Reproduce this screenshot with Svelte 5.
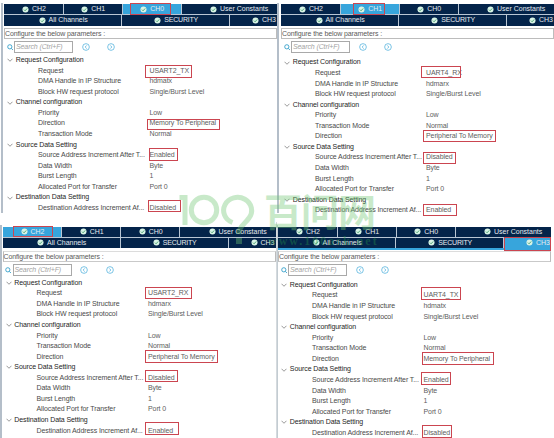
<script>
  const request = (name, handle) => [
    { group: 'Request Configuration' },
    { label: 'Request', value: name },
    { label: 'DMA Handle in IP Structure', value: handle },
    { label: 'Block HW request protocol', value: 'Single/Burst Level' },
    { group: 'Channel configuration' },
    { label: 'Priority', value: 'Low' },
  ];
  const data = (src, dst) => [
    { group: 'Source Data Setting' },
    { label: 'Source Address Increment After T...', value: src },
    { label: 'Data Width', value: 'Byte' },
    { label: 'Burst Length', value: '1' },
    { label: 'Allocated Port for Transfer', value: 'Port 0' },
    { group: 'Destination Data Setting' },
    { label: 'Destination Address Increment Af...', value: dst },
  ];
  const mode = { label: 'Transaction Mode', value: 'Normal' };
  const direction = (value) => ({ label: 'Direction', value });

  const panels = [
    { id: 'a', active: 'CH0', rows: [...request('USART2_TX', 'hdmatx'), direction('Memory To Peripheral'), mode, ...data('Enabled', 'Disabled')] },
    { id: 'b', active: 'CH1', rows: [...request('UART4_RX', 'hdmarx'), mode, direction('Peripheral To Memory'), ...data('Disabled', 'Enabled')] },
    { id: 'c', active: 'CH2', rows: [...request('USART2_RX', 'hdmarx'), mode, direction('Peripheral To Memory'), ...data('Disabled', 'Enabled')] },
    { id: 'd', active: 'CH3', rows: [...request('UART4_TX', 'hdmatx'), mode, direction('Memory To Peripheral'), ...data('Enabled', 'Disabled')] },
  ];
  const top = ['CH2', 'CH1', 'CH0', 'User Constants'];
  const bottom = ['All Channels', 'SECURITY', 'CH3'];

  // Highlight frames: left, top, width, height
  const marks = [
    [130, 3, 41, 12], [144.5, 64.5, 47, 13.5], [147.3, 119, 73, 11], [149, 148, 29, 13], [148, 200, 33, 12],
    [353, 3, 32, 12], [421, 66, 40, 12], [423, 130, 73, 12], [423, 151.5, 33, 12], [423, 203.5, 34, 12],
    [13, 226, 40, 11], [144.5, 287, 47, 12], [145, 350, 73, 13], [145, 370, 33, 12], [144.5, 422, 34, 12.5],
    [504, 237, 47, 14], [421, 287, 40, 13], [421.5, 352, 72, 13], [421, 372, 30, 13], [421.5, 424.5, 30, 13],
  ];
</script>

{#snippet tab(name, active)}
  <div class="tab" class:on={name === active} class:user={name === 'User Constants'} class:last={name === 'CH3'}>
    <svg class="check" viewBox="0 0 12 12"><circle cx="6" cy="6" r="5.2" fill="#d9f4e6" /><path d="M3.3 6.2 5.3 8.2 8.9 4.2" fill="none" stroke="#4ba273" stroke-width="1.6" /></svg>
    <span>{name}</span>
  </div>
{/snippet}

<main>
  {#each panels as p}
    <section class="panel {p.id}">
      <div class="tabs">
        <div class="row first">{#each top as t}{@render tab(t, p.active)}{/each}</div>
        <div class="row second">{#each bottom as t}{@render tab(t, p.active)}{/each}</div>
      </div>
      <div class="hint">Configure the below parameters :</div>
      <div class="tools">
        <svg class="lens" viewBox="0 0 12 12"><circle cx="5.2" cy="5.2" r="3.9" /><path d="M8.1 8.1 11.2 11.4" /></svg>
        <div class="search">Search (Ctrl+F)</div>
        <svg class="nav prev" viewBox="0 0 16 16"><circle cx="8" cy="8" r="6.7" /><path d="M9.5 4.8 6.3 8 9.5 11.2" /></svg>
        <svg class="nav" viewBox="0 0 16 16"><circle cx="8" cy="8" r="6.7" /><path d="M6.5 4.8 9.7 8 6.5 11.2" /></svg>
      </div>
      <div class="tree">
        {#each p.rows as r}
          {#if r.group}
            <div class="line group"><svg class="chev" viewBox="0 0 12 8"><path d="M1 1.5 6 6.5 11 1.5" /></svg><span>{r.group}</span></div>
          {:else}
            <div class="line"><span class="label">{r.label}</span><span class="value">{r.value}</span></div>
          {/if}
        {/each}
      </div>
    </section>
  {/each}

  {#each marks as [x, y, w, h]}
    <i class="mark" style="left:{x}px;top:{y}px;width:{w}px;height:{h}px"></i>
  {/each}

  <div class="brand">
    <svg width="80" height="56" viewBox="0 0 80 56" fill="none" stroke="#70c774" stroke-width="5">
      <path d="M-0.500 8.500H5V36" />
      <circle cx="24" cy="21" r="12.700" />
      <path d="M52.500 33.500A14 13 0 1 1 69 29C65 35 59 37 58.500 45" />
      <path d="M56 52H62" stroke-width="6" />
    </svg>
    <span class="cjk">百问网</span>
    <span class="site">www.100ask.net</span>
  </div>
</main>

<style>
  :global(body) { margin: 0; background: #fff; }
  main {
    position: relative; width: 554px; height: 438px; overflow: hidden; background: #fff;
    display: grid; grid-template-columns: 277px 277px; grid-template-rows: 222px 216px;
    font: 7px/10px "Liberation Sans", Arial, sans-serif; letter-spacing: -0.09px; color: #4a4a4a;
  }
  .panel { box-sizing: border-box; overflow: hidden; min-width: 0; position: relative; white-space: nowrap; }
  .panel::before { content: ''; position: absolute; left: 1px; top: 3px; width: 2px; height: 210px; background: #b4bec9; }
  .a { padding: 4px 0 0 4px; }
  .b { padding: 4px 0 0 4px; }
  .c { padding: 4.500px 2px 0 2.500px; border-right: 1px solid #d5dade; }
  .d { padding: 4.500px 0 0 1px; }
  .b::before { left: 0; width: 2px; }
  .c::before { left: 0; width: 1.500px; height: 213px; }
  .d::before { left: 0; width: 1px; height: 213px; background: #c3ccd2; }
  .tabs { width: 273px; background: #b9c6d4; display: flex; flex-direction: column; gap: 1px; }
  .row { display: flex; gap: 1px; height: 10px; }
  .second { height: 10.500px; }
  .tab {
    box-sizing: border-box; width: 58px; background: #04244a; color: #e6ebf0; padding-left: 1.500px;
    display: flex; align-items: center; justify-content: center; gap: 2.800px; letter-spacing: 0;
  }
  .first .tab:first-child { width: 58.500px; }
  .tab.user { width: auto; flex: 1; padding-left: 20px; }
  .second .tab { width: 117px; }
  .second .tab:nth-child(2) { width: 107px; }
  .second .tab.last { width: auto; flex: 1; padding-left: 21px; }
  .second .tab:nth-child(2) span { letter-spacing: -0.2px; }
  .tab.on { background: #37a5dc; }
  .check { width: 7px; height: 7px; flex: none; }
  .d .tabs { border-bottom: 2px solid #37a5dc; margin-bottom: -2px; }
  .hint {
    box-sizing: border-box; width: 273px; height: 10.500px; margin-top: 2.500px;
    border: 1px solid #bcbcbc; line-height: 9px; letter-spacing: -0.11px; color: #5a5a5a;
  }
  .c .hint, .d .hint { margin-top: 3px; border-bottom-color: #c9c9c9; border-top-color: #dcdcdc; }
  .tools { display: flex; align-items: center; height: 12px; margin-top: 2.500px; padding-left: 2.500px; }
  .lens { width: 6.500px; height: 6.500px; fill: none; stroke: #38a0cb; stroke-width: 1.700; margin-right: 1px; }
  .search {
    box-sizing: border-box; width: 59px; height: 12px; border: 1px solid #a9a9a9;
    color: #a2a2a2; font-style: italic; line-height: 10px; padding-left: 1px; letter-spacing: -0.1px;
  }
  .nav { width: 8px; height: 8px; fill: none; stroke: #4fb0dc; stroke-width: 1.500; }
  .prev { margin: 0 17.500px 0 8.800px; }
  .tree { margin-top: 2px; }
  .b .tree { margin-top: 4.400px; }
  .c .tree { margin-top: 1.700px; }
  .d .tree { margin-top: 3.900px; }
  .line { display: flex; align-items: center; height: 10.570px; line-height: 10.570px; padding-left: 34px; }
  .group { padding-left: 3px; color: #252525; }
  .chev { width: 6px; height: 4px; fill: none; stroke: #777; stroke-width: 1.500; margin-right: 2.800px; }
  .label { width: 111.500px; }
  .b .label { width: 111px; }
  .value { color: #606060; }
  .mark { position: absolute; box-sizing: border-box; border: 1px solid #cb4550; }
  .brand { position: absolute; left: 180px; top: 189px; width: 205px; height: 60px; opacity: 0.38; color: #70c774; }
  .brand svg { position: absolute; left: 0; top: 0; overflow: visible; }
  .cjk { position: absolute; left: 84px; top: -1px; font: 700 38px/44px "Noto Sans CJK SC", sans-serif; letter-spacing: -1px; white-space: nowrap; }
  .site { position: absolute; left: 88px; top: 46px; font: 700 12px/12px "Liberation Serif", serif; letter-spacing: 2px; color: #219448; }
</style>
